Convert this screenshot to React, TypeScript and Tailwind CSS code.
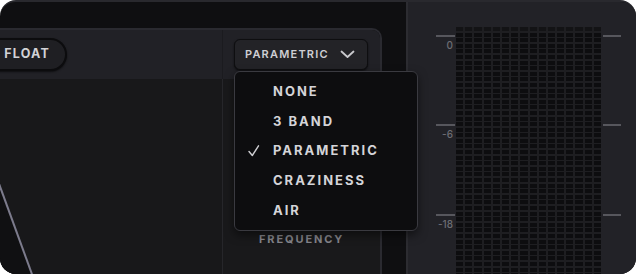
import React from "react";

const font = { fontFamily: "Inter, 'Open Sans', sans-serif" };

function Meter() {
  const rows = 45;
  const cols = 16;
  return (
    <div
      className="grid h-[260px] w-[145px] gap-x-[2px] gap-y-[1.6px] bg-[#1e1e21] content-start overflow-hidden"
      style={{ gridTemplateColumns: `repeat(${cols}, 1fr)` }}
    >
      {Array.from({ length: rows * cols }).map((_, i) => (
        <div key={i} className={`h-[4px] ${i < cols ? "bg-[#131315]" : "bg-[#0d0d0f]"}`} />
      ))}
    </div>
  );
}

const scale = [
  { y: 35, label: "0" },
  { y: 124, label: "-6" },
  { y: 214, label: "-18" },
];

export default function App() {
  const items = ["NONE", "3 BAND", "PARAMETRIC", "CRAZINESS", "AIR"];
  return (
    <div className="w-[636px] h-[274px] bg-white overflow-hidden" style={font}>
      <div className="relative flex h-full w-full overflow-hidden rounded-[16px] border-t-2 border-[#29292e] bg-[#0f0f11]">
        {/* left area */}
        <div className="flex w-[406px] flex-col pt-[26px]">
          <div className="flex flex-1 flex-col overflow-hidden rounded-tr-[10px] border-t-2 border-r-2 border-[#2a2a30] w-[382px]">
            {/* header */}
            <div className="flex h-[49px] bg-[#212126]">
              <div className="flex w-[223px] items-center border-r border-[#1b1b1f]">
                <div className="-ml-[30px] flex h-[33px] w-[97px] items-center justify-end rounded-full border-2 border-[#0c0c0e] bg-[#1f1f23] pr-[15px] shadow-[0_1px_2px_rgba(0,0,0,0.6)]">
                  <span className="text-[12.5px] font-bold tracking-[1.2px] text-[#d2d2d6]">FLOAT</span>
                </div>
              </div>
              <div className="flex flex-1 items-center pl-[11px]">
                <div className="flex h-[31px] w-[134px] items-center justify-between rounded-[6px] border border-[#0e0e10] bg-[#232327] pl-[10px] pr-[12px] shadow-[0_1px_2px_rgba(0,0,0,0.6)]">
                  <span className="text-[11px] font-semibold tracking-[1.2px] text-[#cfcfd3]">PARAMETRIC</span>
                  <svg width="15" height="9" viewBox="0 0 15 9">
                    <path d="M1.5 1.5 L7.5 7 L13.5 1.5" fill="none" stroke="#c9c9cd" strokeWidth="1.8" strokeLinecap="round" strokeLinejoin="round" />
                  </svg>
                </div>
              </div>
            </div>
            {/* body */}
            <div className="flex flex-1">
              <div className="relative w-[223px] border-r border-[#26262a] bg-[#18181a]">
                <svg className="absolute inset-0" width="223" height="196" viewBox="0 0 223 196">
                  <polygon points="-2,104 33,197 -2,197" fill="#101012" />
                  <line x1="-2" y1="102" x2="33" y2="198" stroke="#7c7b8c" strokeWidth="2" />
                </svg>
              </div>
              <div className="flex flex-1 flex-col bg-[#19191b] pl-[36px] pt-[152px]">
                <span className="text-[11px] font-bold tracking-[1.9px] text-[#86868c]">FREQUENCY</span>
              </div>
            </div>
          </div>
        </div>
        {/* right area: meter */}
        <div className="flex flex-1 border-l-2 border-[#2c2c31] bg-[#222227] pt-[25px]">
          <div className="relative w-[48px]">
            {scale.map((s) => (
              <React.Fragment key={s.label}>
                <div className="absolute left-[28px] h-[2px] w-[19px] bg-[#57575d]" style={{ top: s.y - 27 }} />
                <div className="absolute right-[3px] text-[10px] font-medium text-[#6d6d73]" style={{ top: s.y - 27 + 3 }}>
                  {s.label}
                </div>
              </React.Fragment>
            ))}
          </div>
          <Meter />
          <div className="relative flex-1">
            {scale.map((s) => (
              <div key={s.label} className="absolute left-[2px] h-[2px] w-[18px] bg-[#57575d]" style={{ top: s.y - 27 }} />
            ))}
          </div>
        </div>

        {/* dropdown menu */}
        <div className="absolute left-[234px] top-[69px] flex h-[160px] w-[184px] flex-col rounded-[6px] border border-[#3a3a40] bg-[#0d0d0f] pl-[38px] pt-[5px] shadow-[0_4px_10px_rgba(0,0,0,0.5)]">
          {items.map((it) => (
            <div key={it} className="relative flex h-[29.7px] items-center">
              {it === "PARAMETRIC" && (
                <svg className="absolute -left-[25px] top-[9px]" width="12" height="12" viewBox="0 0 12 12">
                  <path d="M1 6.5 L4.3 10.5 L10.5 0.8" fill="none" stroke="#cfcfd3" strokeWidth="1.4" strokeLinecap="round" strokeLinejoin="round" />
                </svg>
              )}
              <span className="text-[13px] font-bold tracking-[2px] text-[#d4d4d8]">{it}</span>
            </div>
          ))}
        </div>
      </div>
    </div>
  );
}
